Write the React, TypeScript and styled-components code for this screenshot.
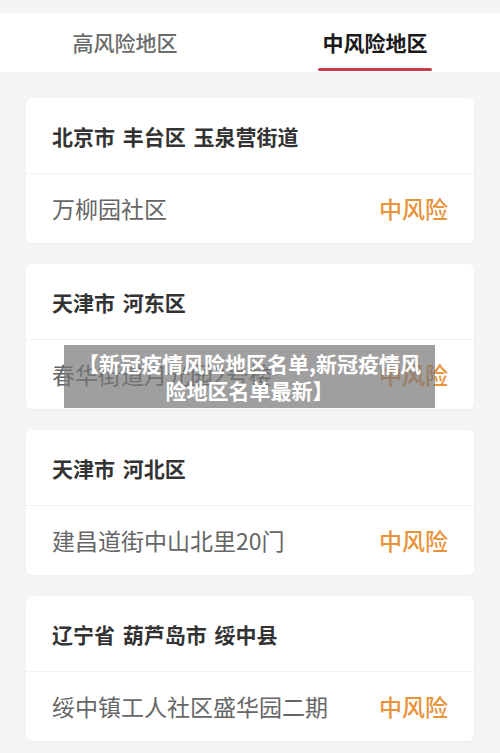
import * as React from 'react'
import styled, { createGlobalStyle } from 'styled-components'

const GlobalStyle = createGlobalStyle`
    html, body {
        margin: 0;
        padding: 0;
        background: #f4f5f7;
    }
    body {
        font-family: "Noto Sans CJK SC", "Noto Sans", sans-serif;
    }
`

const Page = styled.div`
    position: relative;
    width: 500px;
    height: 753px;
    overflow: hidden;
    padding-top: 13px;
    box-sizing: border-box;
    background: #f4f5f7;
`

const TabBar = styled.div`
    display: flex;
    height: 59px;
    background: #ffffff;
`

const Tab = styled.div<{ $active?: boolean }>`
    flex: 1;
    position: relative;
    display: flex;
    align-items: center;
    justify-content: center;
    padding-bottom: 2px;
    font-size: 21px;
    font-weight: ${(p) => (p.$active ? 700 : 500)};
    color: ${(p) => (p.$active ? '#1a1a1a' : '#6b6b6b')};
`

const Underline = styled.span`
    position: absolute;
    left: 68px;
    bottom: 1px;
    width: 114px;
    height: 3px;
    border-radius: 2px;
    background: #c2404b;
`

const List = styled.div`
    display: flex;
    flex-direction: column;
    gap: 21px;
    padding: 26px 26px 0;
`

const Card = styled.div`
    background: #ffffff;
    border-radius: 6px;
    box-shadow: 0 1px 4px rgba(0, 0, 0, 0.03);
    display: flex;
    flex-direction: column;
`

const CardTitle = styled.div`
    height: 76px;
    display: flex;
    align-items: center;
    padding: 0 26px;
    box-sizing: border-box;
    border-bottom: 1px solid #f1f1f1;
    font-size: 21px;
    font-weight: 700;
    color: #333333;
    white-space: pre;
    word-spacing: 3px;
`

const CardRow = styled.div`
    height: 69px;
    display: flex;
    align-items: center;
    justify-content: space-between;
    padding: 0 26px 1px;
    box-sizing: border-box;
    font-size: 23px;
    color: #666666;
`

const Level = styled.span`
    color: #e8923a;
    font-weight: 500;
`

const Caption = styled.div`
    position: absolute;
    left: 64px;
    top: 345px;
    width: 371px;
    height: 63px;
    display: flex;
    align-items: center;
    justify-content: center;
    text-align: center;
    background: rgba(118, 118, 118, 0.7);
    color: #ffffff;
    font-size: 21px;
    font-weight: 700;
    line-height: 27px;
`

const areas = [
    { region: '北京市 丰台区 玉泉营街道', place: '万柳园社区' },
    { region: '天津市 河东区', place: '春华街道月光园2号楼' },
    { region: '天津市 河北区', place: '建昌道街中山北里20门' },
    { region: '辽宁省 葫芦岛市 绥中县', place: '绥中镇工人社区盛华园二期' },
]

const App = () => {
    return (
        <Page>
            <GlobalStyle />
            <TabBar>
                <Tab>高风险地区</Tab>
                <Tab $active>
                    中风险地区
                    <Underline />
                </Tab>
            </TabBar>
            <List>
                {areas.map((a) => (
                    <Card key={a.place}>
                        <CardTitle>{a.region}</CardTitle>
                        <CardRow>
                            <span>{a.place}</span>
                            <Level>中风险</Level>
                        </CardRow>
                    </Card>
                ))}
            </List>
            <Caption>
                【新冠疫情风险地区名单,新冠疫情风
                <br />
                险地区名单最新】
            </Caption>
        </Page>
    )
}

export default App
